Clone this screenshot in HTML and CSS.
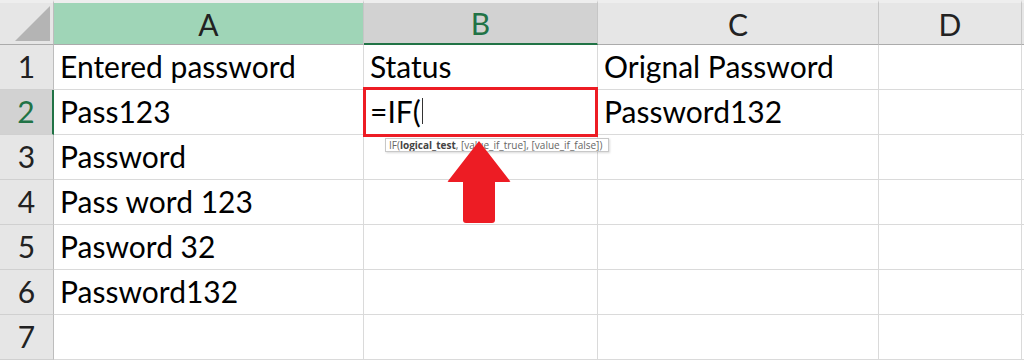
FILE: index.html
```html
<!DOCTYPE html>
<html lang="en">
  <head>
    <meta charset="UTF-8" />
    <title>IF formula</title>
    <link rel="stylesheet" href="styles.css">
  </head>
  <body>
    <div class="sheet">
      <div class="corner"><span class="corner-tri"></span></div>
      <div class="col-head picked">A</div>
      <div class="col-head active">B</div>
      <div class="col-head">C</div>
      <div class="col-head">D</div>
      <div class="col-head last"></div>

      <div class="row-head">1</div>
      <div class="cell">Entered password</div>
      <div class="cell">Status</div>
      <div class="cell">Orignal Password</div>
      <div class="cell"></div>
      <div class="cell last"></div>

      <div class="row-head active">2</div>
      <div class="cell">Pass123</div>
      <div class="cell editing">
        =IF(<span class="caret"></span>
        <div class="tip">IF(<b>logical_test</b>, [value_if_true], [value_if_false])</div>
        <svg class="arrow" width="66" height="84" viewBox="0 0 66 84">
          <path d="M33 1 L64 41 Q65 42 63 42 L49 42 L49 80 Q49 83 46 83 L20 83 Q17 83 17 80 L17 42 L3 42 Q1 42 2 41 Z" fill="#ed1c24" />
        </svg>
      </div>
      <div class="cell">Password132</div>
      <div class="cell"></div>
      <div class="cell last"></div>

      <div class="row-head">3</div>
      <div class="cell">Password</div>
      <div class="cell"></div>
      <div class="cell"></div>
      <div class="cell"></div>
      <div class="cell last"></div>

      <div class="row-head">4</div>
      <div class="cell">Pass word 123</div>
      <div class="cell"></div>
      <div class="cell"></div>
      <div class="cell"></div>
      <div class="cell last"></div>

      <div class="row-head">5</div>
      <div class="cell">Pasword 32</div>
      <div class="cell"></div>
      <div class="cell"></div>
      <div class="cell"></div>
      <div class="cell last"></div>

      <div class="row-head">6</div>
      <div class="cell">Password132</div>
      <div class="cell"></div>
      <div class="cell"></div>
      <div class="cell"></div>
      <div class="cell last"></div>

      <div class="row-head">7</div>
      <div class="cell"></div>
      <div class="cell"></div>
      <div class="cell"></div>
      <div class="cell"></div>
      <div class="cell last"></div>
    </div>
  </body>
</html>
```

FILE: styles.css
```css
* {
  margin: 0;
  padding: 0;
  box-sizing: border-box;
}

body {
  font-family: Lato, "Open Sans", sans-serif;
  background: #ffffff;
  color: #000;
  overflow: hidden;
}

.sheet {
  display: grid;
  grid-template-columns: 54px 310px 234px 281px 143px 1fr;
  grid-template-rows: 45px repeat(7, 45px);
  width: 1024px;
  height: 360px;
  overflow: hidden;
}

/* header row */
.corner {
  background: #e6e6e6;
  border-right: 1px solid #bdbdbd;
  border-bottom: 1px solid #ababab;
  border-top: 3px solid #eeeeee;
  position: relative;
}

.corner-tri {
  position: absolute;
  right: 3px;
  bottom: 3px;
  width: 0;
  height: 0;
  border-left: 35px solid transparent;
  border-bottom: 35px solid #b4b4b4;
}

.col-head {
  background: #e6e6e6;
  border-top: 3px solid #eeeeee;
  border-right: 1px solid #c6c6c6;
  border-bottom: 1px solid #ababab;
  font-size: 30px;
  color: #222;
  display: flex;
  align-items: center;
  justify-content: center;
}

.col-head.picked {
  background: #9fd5b7;
}

.col-head.active {
  background: #d2d2d2;
  color: #217346;
  border-bottom: 2px solid #217346;
}

.col-head.last {
  border-right: none;
}

/* row headers */
.row-head {
  background: #e6e6e6;
  border-right: 1px solid #bdbdbd;
  border-bottom: 1px solid #d0d0d0;
  font-size: 30px;
  color: #222;
  display: flex;
  align-items: center;
  justify-content: center;
  padding-bottom: 2px;
}

.row-head.active {
  background: #d2d2d2;
  color: #217346;
  border-right: 2px solid #217346;
}

/* cells */
.cell {
  border-right: 1px solid #dadada;
  border-bottom: 1px solid #dadada;
  font-size: 30px;
  padding: 0 6px 2px;
  display: flex;
  align-items: center;
  white-space: nowrap;
}

.cell.last {
  border-right: none;
}

.cell.editing {
  position: relative;
  overflow: visible;
}

.cell.editing::after {
  content: "";
  position: absolute;
  top: -3px;
  left: -1px;
  right: -1px;
  bottom: -3px;
  border: 3px solid #ed1c24;
}

.caret {
  display: inline-block;
  width: 1px;
  height: 26px;
  background: #333;
  margin-left: 1px;
}

.tip {
  position: absolute;
  top: 48px;
  left: 21px;
  width: 224px;
  height: 14px;
  background: #fff;
  border: 1px solid #c8c8c8;
  box-shadow: 1px 1px 2px rgba(0, 0, 0, 0.15);
  font-family: "Open Sans", sans-serif;
  font-size: 10px;
  line-height: 12px;
  color: #666;
  padding-left: 3px;
  white-space: nowrap;
  overflow: hidden;
  z-index: 2;
}

.tip b {
  color: #444;
}

.arrow {
  position: absolute;
  top: 50px;
  left: 82px;
  z-index: 3;
}
```
